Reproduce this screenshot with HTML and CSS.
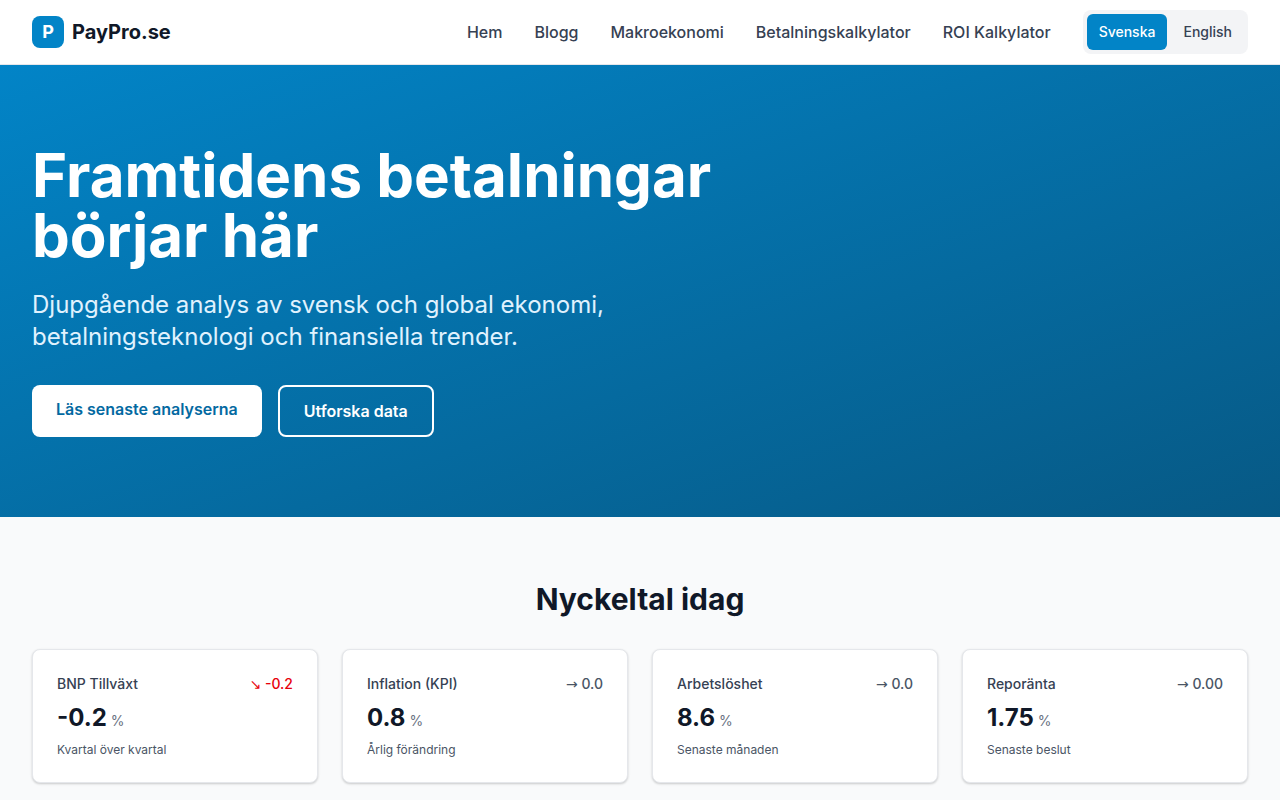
FILE: index.html
```html
<!DOCTYPE html>
<html lang="sv">
<head>
  <meta charset="UTF-8">
  <meta name="viewport" content="width=device-width, initial-scale=1.0">
  <title>PayPro.se</title>
  <link rel="stylesheet" href="styles.css">
</head>
<body>

  <!-- Header -->
  <header class="header">
    <div class="container header-inner">
      <a href="#" class="logo">
        <span class="logo-mark">P</span>
        <span class="logo-text">PayPro.se</span>
      </a>
      <div class="header-right">
        <nav class="nav">
          <a href="#">Hem</a>
          <a href="#">Blogg</a>
          <a href="#">Makroekonomi</a>
          <a href="#">Betalningskalkylator</a>
          <a href="#">ROI Kalkylator</a>
        </nav>
        <div class="lang-switch">
          <button type="button" class="lang-btn active">Svenska</button>
          <button type="button" class="lang-btn">English</button>
        </div>
      </div>
    </div>
  </header>

  <main>
    <!-- Hero -->
    <section class="hero">
      <div class="container">
        <div class="hero-content">
          <h1>Framtidens betalningar börjar här</h1>
          <p>Djupgående analys av svensk och global ekonomi, betalningsteknologi och finansiella trender.</p>
          <div class="hero-actions">
            <a href="#" class="btn btn-primary">Läs senaste analyserna</a>
            <a href="#" class="btn btn-outline">Utforska data</a>
          </div>
        </div>
      </div>
    </section>

    <!-- Key figures -->
    <section class="stats">
      <div class="container">
        <h2>Nyckeltal idag</h2>
        <div class="stats-grid">
          <div class="card">
            <div class="card-top">
              <h3>BNP Tillväxt</h3>
              <span class="trend trend-down"><span class="arrow">↘</span> -0.2</span>
            </div>
            <div class="card-value"><span class="number">-0.2</span><span class="unit">%</span></div>
            <p class="card-note">Kvartal över kvartal</p>
          </div>
          <div class="card">
            <div class="card-top">
              <h3>Inflation (KPI)</h3>
              <span class="trend"><span class="arrow">→</span> 0.0</span>
            </div>
            <div class="card-value"><span class="number">0.8</span><span class="unit">%</span></div>
            <p class="card-note">Årlig förändring</p>
          </div>
          <div class="card">
            <div class="card-top">
              <h3>Arbetslöshet</h3>
              <span class="trend"><span class="arrow">→</span> 0.0</span>
            </div>
            <div class="card-value"><span class="number">8.6</span><span class="unit">%</span></div>
            <p class="card-note">Senaste månaden</p>
          </div>
          <div class="card">
            <div class="card-top">
              <h3>Reporänta</h3>
              <span class="trend"><span class="arrow">→</span> 0.00</span>
            </div>
            <div class="card-value"><span class="number">1.75</span><span class="unit">%</span></div>
            <p class="card-note">Senaste beslut</p>
          </div>
        </div>
      </div>
    </section>
  </main>

</body>
</html>
```
FILE: styles.css
```css
* {
  box-sizing: border-box;
  margin: 0;
  padding: 0;
}
body {
  font-family: Inter, "Liberation Sans", sans-serif;
  font-size: 16px;
  line-height: 24px;
  color: #101828;
  background-color: #f9fafb;
}
a {
  color: inherit;
  text-decoration: none;
}
.container {
  max-width: 1280px;
  margin: 0 auto;
  padding: 0 32px;
}

/* Header */
.header {
  background-color: #fff;
  border-bottom: 1px solid #e5e7eb;
}
.header-inner {
  display: flex;
  align-items: center;
  justify-content: space-between;
  min-height: 64px;
}
.logo {
  display: flex;
  align-items: center;
  gap: 8px;
}
.logo-mark {
  display: flex;
  align-items: center;
  justify-content: center;
  width: 32px;
  height: 32px;
  border-radius: 8px;
  background-color: #0284c7;
  color: #fff;
  font-size: 18px;
  font-weight: 700;
}
.logo-text {
  font-size: 20px;
  line-height: 28px;
  font-weight: 700;
}
.header-right,
.nav {
  display: flex;
  align-items: center;
  gap: 32px;
}
.nav a {
  font-weight: 500;
  color: #364153;
}
.lang-switch {
  display: flex;
  gap: 4px;
  padding: 4px;
  border-radius: 8px;
  background-color: #f3f4f6;
}
.lang-btn {
  padding: 8px 12px;
  border: none;
  border-radius: 6px;
  background: transparent;
  color: #364153;
  font-family: inherit;
  font-size: 14px;
  line-height: 20px;
  font-weight: 500;
  cursor: pointer;
}
.lang-btn.active {
  background-color: #0284c7;
  color: #fff;
}

/* Hero */
.hero {
  padding: 80px 0;
  background: linear-gradient(to bottom right, #0284c7, #075985);
  color: #fff;
}
.hero-content {
  max-width: 768px;
}
.hero h1 {
  margin-bottom: 24px;
  font-size: 60px;
  line-height: 60px;
  font-weight: 700;
}
.hero p {
  margin-bottom: 32px;
  font-size: 24px;
  line-height: 32px;
  color: #e0f2fe;
}
.hero-actions {
  display: flex;
  gap: 16px;
}
.btn {
  padding: 12px 24px;
  border-radius: 8px;
  font-weight: 600;
}
.btn-primary {
  background-color: #fff;
  color: #0369a1;
}
.btn-outline {
  border: 2px solid #fff;
}

/* Key figures */
.stats {
  padding: 64px 0;
}
.stats h2 {
  margin-bottom: 32px;
  font-size: 30px;
  line-height: 36px;
  font-weight: 700;
  text-align: center;
}
.stats-grid {
  display: grid;
  grid-template-columns: repeat(4, 1fr);
  gap: 24px;
}
.card {
  padding: 24px;
  border: 1px solid #e5e7eb;
  border-radius: 8px;
  background-color: #fff;
  box-shadow: 0 1px 3px rgba(0, 0, 0, 0.1), 0 1px 2px rgba(0, 0, 0, 0.1);
}
.card-top {
  display: flex;
  align-items: center;
  justify-content: space-between;
  margin-bottom: 8px;
  font-size: 14px;
  line-height: 20px;
}
.card-top h3 {
  font-size: 14px;
  font-weight: 500;
  color: #364153;
}
.trend {
  font-weight: 500;
  color: #4a5565;
}
.trend-down {
  color: #e7000b;
}
.arrow {
  font-family: "DejaVu Sans", sans-serif;
}
.card-value {
  display: flex;
  align-items: baseline;
  gap: 4px;
}
.number {
  font-size: 24px;
  line-height: 32px;
  font-weight: 700;
}
.unit {
  font-size: 14px;
  line-height: 20px;
  color: #6a7282;
}
.card-note {
  margin-top: 8px;
  font-size: 12px;
  line-height: 16px;
  color: #4a5565;
}

@media (max-width: 900px) {
  .nav {
    display: none;
  }
  .stats-grid {
    grid-template-columns: repeat(2, 1fr);
  }
}
```
